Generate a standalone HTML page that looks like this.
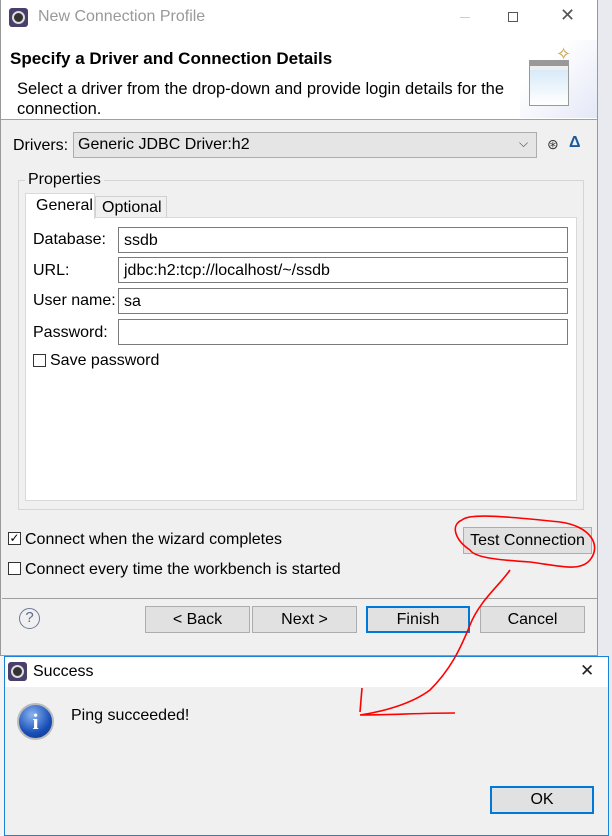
<!DOCTYPE html>
<html><head><meta charset="utf-8"><style>
*{box-sizing:border-box;margin:0;padding:0}
body{width:612px;height:836px;position:relative;overflow:hidden;background:#f4f4f4;font-family:"Liberation Sans",sans-serif;font-size:16px;color:#000}
.a{position:absolute;white-space:nowrap}
.inp{position:absolute;background:#fff;border:1px solid #7a7a7a;height:26px;padding:3px 5px;font-size:16px;line-height:18px}
.btn{position:absolute;background:#e1e1e1;border:1px solid #adadad;text-align:center;font-size:16px;line-height:25px}
.cb{position:absolute;width:13px;height:13px;border:1px solid #333;background:#fff;font-size:12px;line-height:11px;text-align:center}
</style></head><body>
<div class="a" style="left:598px;top:0;width:14px;height:836px;background:#e8eaf0"></div>
<div class="a" style="left:0;top:0;width:598px;height:656px;background:#f0f0f0;border:1px solid #999;border-top:none"></div>
<div class="a" style="left:1px;top:0;width:596px;height:34px;background:#fff"></div>
<div class="a" style="left:9px;top:8px;width:19px;height:19px;background:#4a3f6b;border-radius:3px"></div>
<div class="a" style="left:12px;top:11px;width:13px;height:13px;border:2px solid #ddd;border-radius:50%;background:#333"></div>
<div class="a" style="left:38px;top:8px;color:#999;font-size:16px">New Connection Profile</div>
<div class="a" style="left:460px;top:17px;width:10px;height:1px;background:#ccc"></div>
<div class="a" style="left:508px;top:12px;width:10px;height:10px;border:1px solid #555"></div>
<div class="a" style="left:560px;top:5px;font-size:18px;color:#555">✕</div>
<div class="a" style="left:1px;top:34px;width:596px;height:86px;background:#fff;border-bottom:1px solid #a0a0a0"></div>
<div class="a" style="left:520px;top:40px;width:77px;height:78px;background:linear-gradient(135deg,#fff 30%,#e4e8f6)"></div>
<div class="a" style="left:529px;top:60px;width:40px;height:46px;border:1px solid #999;background:linear-gradient(#999 0,#999 5px,#eee 5px,#eee 9px,#d8eaf8 9px,#fff 100%)"></div>
<div class="a" style="left:556px;top:44px;color:#c8a040;font-size:18px">✧</div>
<div class="a" style="left:10px;top:49px;font-weight:bold;font-size:17px">Specify a Driver and Connection Details</div>
<div class="a" style="left:17px;top:80px;font-size:16.5px">Select a driver from the drop-down and provide login details for the</div>
<div class="a" style="left:17px;top:100px;font-size:16.5px">connection.</div>
<div class="a" style="left:13px;top:137px">Drivers:</div>
<div class="a" style="left:73px;top:132px;width:464px;height:26px;background:#e5e5e5;border:1px solid #adadad;padding:3px 4px">Generic JDBC Driver:h2</div>
<div class="a" style="left:519px;top:136px;font-size:12px;color:#444">⌵</div>
<div class="a" style="left:547px;top:136px;font-size:14px;color:#333">⊛</div>
<div class="a" style="left:569px;top:134px;font-size:16px;color:#1a5a9a;font-weight:bold">Δ</div>
<div class="a" style="left:18px;top:180px;width:566px;height:330px;border:1px solid #d5d5d5"></div>
<div class="a" style="left:25px;top:171px;background:#f0f0f0;padding:0 3px">Properties</div>
<div class="a" style="left:95px;top:196px;width:72px;height:22px;border:1px solid #d0d0d0;background:#f0f0f0;padding:2px 6px">Optional</div>
<div class="a" style="left:25px;top:217px;width:552px;height:284px;background:#fff;border:1px solid #d9d9d9"></div>
<div class="a" style="left:25px;top:193px;width:70px;height:26px;background:#fff;border:1px solid #d9d9d9;border-bottom:none;padding:3px 10px">General</div>
<div class="a" style="left:33px;top:231px">Database:</div>
<div class="inp" style="left:118px;top:227px;width:450px;padding-top:4px">ssdb</div>
<div class="a" style="left:33px;top:262px">URL:</div>
<div class="inp" style="left:118px;top:257px;width:450px;padding-top:4px">jdbc:h2:tcp://localhost/~/ssdb</div>
<div class="a" style="left:33px;top:292px">User name:</div>
<div class="inp" style="left:118px;top:288px;width:450px;padding-top:4px">sa</div>
<div class="a" style="left:33px;top:324px">Password:</div>
<div class="inp" style="left:118px;top:319px;width:450px"></div>
<div class="cb" style="left:33px;top:354px"></div>
<div class="a" style="left:50px;top:352px">Save password</div>
<div class="cb" style="left:8px;top:532px">✓</div>
<div class="a" style="left:25px;top:531px">Connect when the wizard completes</div>
<div class="btn" style="left:463px;top:527px;width:129px;height:27px">Test Connection</div>
<div class="cb" style="left:8px;top:562px"></div>
<div class="a" style="left:25px;top:561px">Connect every time the workbench is started</div>
<div class="a" style="left:2px;top:598px;width:595px;height:1px;background:#a0a0a0"></div>
<div class="a" style="left:19px;top:608px;width:21px;height:21px;border:1.5px solid #6a7a9a;border-radius:50%;text-align:center;line-height:18px;color:#5a6a8a;font-size:15px">?</div>
<div class="btn" style="left:145px;top:606px;width:105px;height:27px">&lt; Back</div>
<div class="btn" style="left:252px;top:606px;width:105px;height:27px">Next &gt;</div>
<div class="btn" style="left:366px;top:606px;width:104px;height:27px;border:2px solid #0078d7;line-height:23px">Finish</div>
<div class="btn" style="left:480px;top:606px;width:105px;height:27px">Cancel</div>
<div class="a" style="left:4px;top:656px;width:605px;height:180px;background:#f0f0f0;border:1px solid #1883d7"></div>
<div class="a" style="left:5px;top:657px;width:603px;height:30px;background:#fff"></div>
<div class="a" style="left:8px;top:662px;width:19px;height:19px;background:#4a3f6b;border-radius:3px"></div>
<div class="a" style="left:11px;top:665px;width:13px;height:13px;border:2px solid #ddd;border-radius:50%;background:#333"></div>
<div class="a" style="left:33px;top:663px">Success</div>
<div class="a" style="left:580px;top:661px;font-size:17px;color:#222">✕</div>
<div class="a" style="left:17px;top:703px;width:37px;height:37px;border-radius:50%;background:radial-gradient(circle at 40% 30%,#8ab4f0,#1a4fb8 60%,#0c2f7a);border:2px solid #bbb;color:#fff;text-align:center;font-weight:bold;font-size:22px;line-height:33px;font-family:'Liberation Serif',serif">i</div>
<div class="a" style="left:71px;top:707px">Ping succeeded!</div>
<div class="btn" style="left:490px;top:786px;width:104px;height:28px;border:2px solid #0078d7;line-height:24px">OK</div>
<svg class="a" style="left:0;top:0" width="612" height="836"><g fill="none" stroke="#f00" stroke-width="1.6"><path d="M462 520 C470 512 520 518 560 522 C590 526 602 545 590 560 C580 572 560 566 530 562 C500 560 475 558 470 550 C455 540 450 525 462 520"/><path d="M510 570 C500 585 480 600 470 625 C460 650 450 670 430 690 C410 705 380 712 360 715 C390 715 420 713 455 713"/><path d="M360 712 L362 688"/></g></svg>
</body></html>
